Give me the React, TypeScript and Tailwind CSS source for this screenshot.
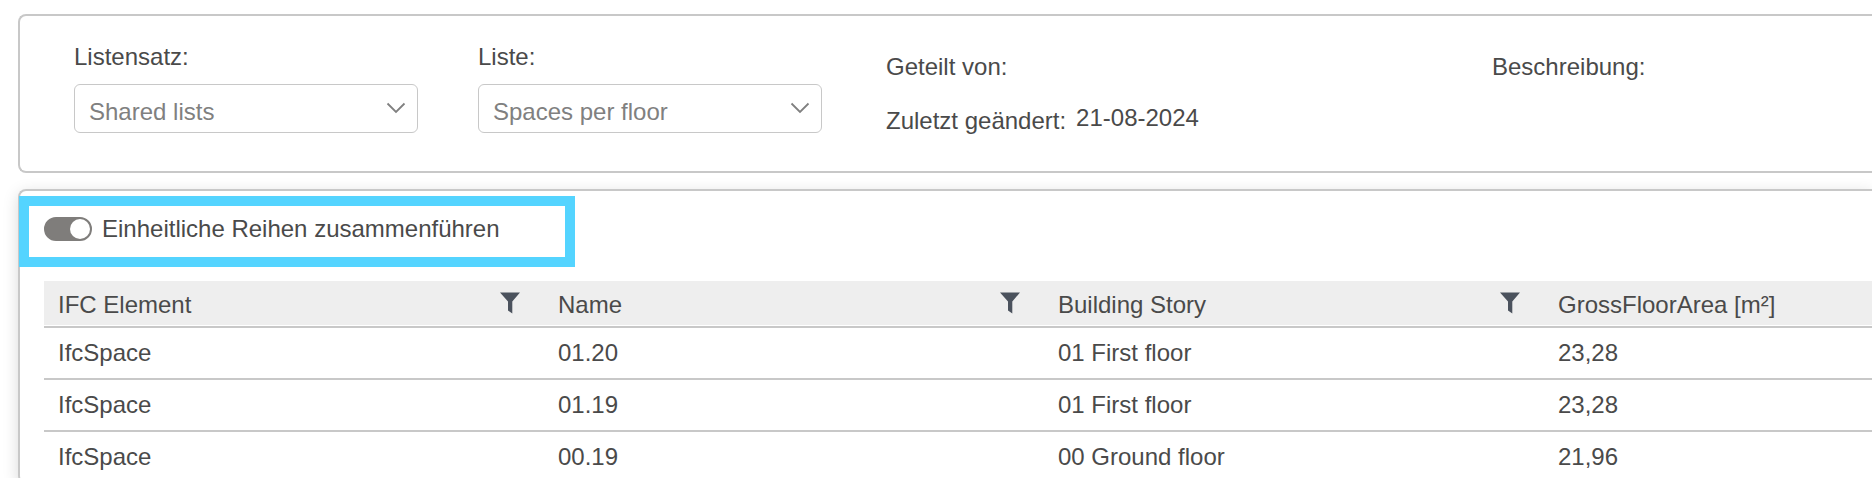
import { useState } from "react";

const columns = ["IFC Element", "Name", "Building Story", "GrossFloorArea [m²]"];

const rows = [
  ["IfcSpace", "01.20", "01 First floor", "23,28"],
  ["IfcSpace", "01.19", "01 First floor", "23,28"],
  ["IfcSpace", "00.19", "00 Ground floor", "21,96"],
];

function FilterIcon() {
  return (
    <svg width="20" height="22" viewBox="0 0 20 22" fill="#4b525d" aria-hidden="true">
      <path d="M0 0.5H20L12.3 9.5V21.5L8 18.5V9.5Z" />
    </svg>
  );
}

function SelectField({ id, label, value }: { id: string; label: string; value: string }) {
  return (
    <div className="w-[344px] shrink-0">
      <label htmlFor={id} className="block">
        {label}
      </label>
      <div className="mt-[11px] grid">
        <select
          id={id}
          className="col-start-1 row-start-1 h-[49px] w-full appearance-none rounded-md border border-[#c8c8c8] bg-white pt-[7px] pl-[14px] text-[#808080]"
        >
          <option>{value}</option>
        </select>
        <svg
          className="pointer-events-none col-start-1 row-start-1 mt-[18px] mr-3 justify-self-end"
          width="20"
          height="12"
          viewBox="0 0 20 12"
          fill="none"
          stroke="#808080"
          strokeWidth="1.8"
          aria-hidden="true"
        >
          <path d="M1.5 1.5L10 10L18.5 1.5" />
        </svg>
      </div>
    </div>
  );
}

export default function App() {
  const [merged, setMerged] = useState(true);

  return (
    <div className="overflow-hidden bg-white pt-[14px] pl-[18px] font-['Liberation_Sans',Arial,sans-serif] text-[24px] leading-8 text-[#4a4a4a]">
      <section className="flex items-start rounded-l-lg border-2 border-r-0 border-[#c8c8c8] bg-white pt-[25px] pb-[34px] pl-[54px]">
        <div className="flex shrink-0 gap-[60px]">
          <SelectField id="listset" label="Listensatz:" value="Shared lists" />
          <SelectField id="list" label="Liste:" value="Spaces per floor" />
        </div>
        <div className="ml-16 w-[606px] shrink-0 pt-[10px]">
          <p>Geteilt von:</p>
          <div className="mt-[19px] flex items-start gap-[10px]">
            <span className="pt-[3px]">Zuletzt geändert:</span>
            <span>21-08-2024</span>
          </div>
        </div>
        <p className="pt-[10px]">Beschreibung:</p>
      </section>

      <section className="mt-4 rounded-l-lg border-2 border-r-0 border-b-0 border-[#c8c8c8] bg-white pt-[5px] shadow-[0_4px_16px_rgba(0,0,0,0.15)]">
        <div className="-ml-px h-[71px] w-[556px] border-[10px] border-[#54d4ff] bg-white pt-[7px] pl-[15px]">
          <label className="flex w-fit items-center gap-[10px]">
            <input
              type="checkbox"
              role="switch"
              checked={merged}
              onChange={(e) => setMerged(e.target.checked)}
              className="flex h-6 w-12 appearance-none items-center rounded-full border-2 border-[#7f7d7b] bg-[#7f7d7b] before:size-5 before:rounded-full before:bg-white checked:justify-end"
            />
            Einheitliche Reihen zusammenführen
          </label>
        </div>

        <div className="mt-[14px] pl-6">
          <table className="w-full table-fixed border-separate border-spacing-0 text-left">
            <colgroup>
              <col className="w-[500px]" />
              <col className="w-[500px]" />
              <col className="w-[500px]" />
              <col />
            </colgroup>
            <thead>
              <tr>
                {columns.map((name, i) => (
                  <th key={name} className="border-b-2 border-[#c8c8c8] p-0 pb-px font-normal">
                    <div className="flex h-11 items-center justify-between bg-[#eeeeee] pr-6 pl-[14px]">
                      <span className="pt-1 whitespace-nowrap">{name}</span>
                      {i < 3 && (
                        <button type="button" aria-label={`Filter ${name}`}>
                          <FilterIcon />
                        </button>
                      )}
                    </div>
                  </th>
                ))}
              </tr>
            </thead>
            <tbody>
              {rows.map((row) => (
                <tr key={row[1]}>
                  {row.map((cell, i) => (
                    <td key={i} className="border-b-2 border-[#c8c8c8] py-[9px] pl-[14px]">
                      {cell}
                    </td>
                  ))}
                </tr>
              ))}
            </tbody>
          </table>
        </div>
      </section>
    </div>
  );
}
